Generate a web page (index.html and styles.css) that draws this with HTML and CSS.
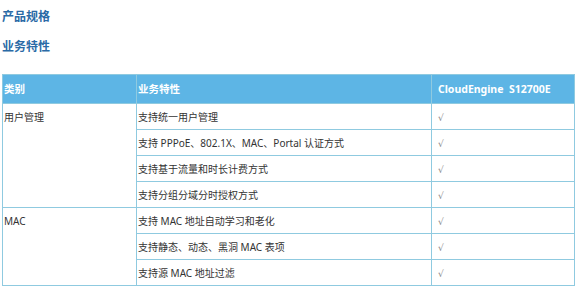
FILE: index.html
```html
<!DOCTYPE html>
<html lang="zh-CN">
<head>
<meta charset="utf-8">
<title>产品规格</title>
<link rel="stylesheet" href="styles.css">
</head>
<body>
<h3 class="title">产品规格</h3>
<h4 class="subtitle">业务特性</h4>
<table class="spec">
  <colgroup>
    <col class="c1"><col class="c2"><col class="c3">
  </colgroup>
  <thead>
    <tr><th>类别</th><th>业务特性</th><th class="model">CloudEngine&nbsp; S12700E</th></tr>
  </thead>
  <tbody>
    <tr><td rowspan="4">用户管理</td><td>支持统一用户管理</td><td class="chk">√</td></tr>
    <tr><td>支持 PPPoE、802.1X、MAC、Portal 认证方式</td><td class="chk">√</td></tr>
    <tr><td>支持基于流量和时长计费方式</td><td class="chk">√</td></tr>
    <tr><td>支持分组分域分时授权方式</td><td class="chk">√</td></tr>
    <tr><td rowspan="3">MAC</td><td>支持 MAC 地址自动学习和老化</td><td class="chk">√</td></tr>
    <tr><td>支持静态、动态、黑洞 MAC 表项</td><td class="chk">√</td></tr>
    <tr><td>支持源 MAC 地址过滤</td><td class="chk">√</td></tr>
  </tbody>
</table>
</body>
</html>
```
FILE: styles.css
```css
html, body { margin: 0; padding: 0; background: #fff; }
body {
  padding: 0 2px;
  font-family: "Noto Sans", "Noto Sans CJK SC", sans-serif;
  color: #333;
}
.title, .subtitle {
  margin: 0;
  font-size: 12px;
  font-weight: bold;
  color: #2a6aa6;
  line-height: 14px;
}
.title { padding-top: 10px; }
.subtitle { padding-top: 16px; }
.spec {
  margin-top: 20px;
  border-collapse: collapse;
  table-layout: fixed;
  width: 572px;
  font-size: 10px;
}
.c1 { width: 134px; }
.c2 { width: 295px; }
.c3 { width: 143px; }
.spec thead tr { height: 29px; }
.spec tbody tr { height: 26px; }
.spec th, .spec td {
  border: 1px solid #8fcae0;
  text-align: left;
  vertical-align: top;
  padding: 0 0 0 1px;
  line-height: 12px;
}
.spec th {
  background: #5db5e5;
  color: #fff;
  font-weight: bold;
  font-size: 10.5px;
  padding-top: 8px;
}
.spec th.model { padding-left: 6px; }
.spec td { padding-top: 7px; }
.spec td.chk { padding-left: 6px; color: #888; font-family: "DejaVu Sans", sans-serif; font-size: 9px; padding-top: 8px; }
```
